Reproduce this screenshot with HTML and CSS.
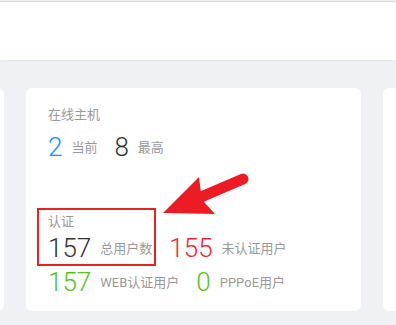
FILE: index.html
```html
<!DOCTYPE html>
<html>
  <head>
  <meta charset='utf-8'>
  <link rel="stylesheet" href="styles.css">
  </head>

  <body>
  <div class="header"></div>

  <div class="board">
    <div class="cards">
      <div class="card"></div>

      <div class="card main">
        <div class="title">在线主机</div>
        <div class="row">
          <div class="stat"><span class="num blue">2</span><span class="label">当前</span></div>
          <div class="stat"><span class="num">8</span><span class="label">最高</span></div>
        </div>

        <div class="title second">认证</div>
        <div class="row">
          <div class="stat"><span class="num">157</span><span class="label">总用户数</span></div>
          <div class="stat"><span class="num red">155</span><span class="label">未认证用户</span></div>
        </div>
        <div class="row">
          <div class="stat"><span class="num green">157</span><span class="label">WEB认证用户</span></div>
          <div class="stat"><span class="num green">0</span><span class="label">PPPoE用户</span></div>
        </div>

        <div class="mark"></div>
      </div>

      <div class="card"></div>
    </div>
  </div>

  <svg class="arrow" width="396" height="325" viewBox="0 0 396 325">
    <line x1="201" y1="197" x2="243" y2="179" stroke="#ed1c24" stroke-width="11" stroke-linecap="round"/>
    <polygon points="163,213 199,177 201,193 204,202 215,214" fill="#ed1c24"/>
  </svg>
  </body>
</html>
```

FILE: styles.css
```css
body {
  margin: 0;
  font-family: Roboto, "Noto Sans CJK SC", sans-serif;
  background: #f0f1f5;
  overflow: hidden;
  width: 396px;
  height: 325px;
  position: relative;
}

.header {
  margin-top: 1px;
  height: 58px;
  background: #fff;
  border-top: 1px solid #dcdcdc;
  box-shadow: 0 1px 3px rgba(0, 0, 0, 0.06);
}

.board {
  padding-top: 28px;
  overflow: hidden;
}

.cards {
  display: flex;
  gap: 22px;
  margin-left: -331px;
}

.card {
  flex: none;
  width: 335px;
  height: 223px;
  background: #fff;
  border-radius: 6px;
  box-sizing: border-box;
}

.main {
  position: relative;
  padding: 18px 22px 0;
}

.title {
  font-size: 13px;
  line-height: 18px;
  color: #999;
}

.second {
  margin-top: 49px;
}

.row {
  display: flex;
  gap: 17px;
  height: 34px;
}

.title + .row {
  margin-top: 6px;
}

.second + .row {
  margin-top: 0;
}

.stat {
  display: flex;
  align-items: center;
}

.num {
  font-size: 26px;
  font-weight: 300;
  line-height: 34px;
  color: #333;
}

.label {
  font-size: 13px;
  line-height: 18px;
  color: #999;
  margin-left: 9px;
  padding-top: 2px;
}

.blue { color: #1890ff; }
.red { color: #f5222d; }
.green { color: #52c41a; }

.mark {
  position: absolute;
  left: 11px;
  top: 120px;
  width: 119px;
  height: 58px;
  box-sizing: border-box;
  border: 2px solid #e8202a;
}

.arrow {
  position: absolute;
  left: 0;
  top: 0;
}
```
